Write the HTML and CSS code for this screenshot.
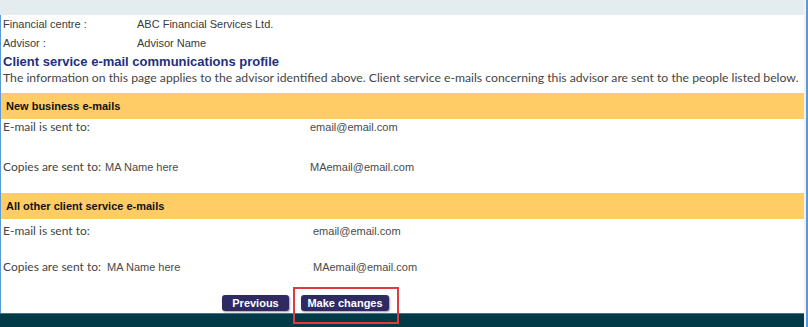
FILE: index.html
```html
<!DOCTYPE html>
<html lang="en">
<head>
  <meta charset="UTF-8" />
  <title>Client service e-mail communications profile</title>
  <link rel="stylesheet" href="styles.css">
</head>
<body>

<div class="window">
  <div class="page">
    <div class="topbar"></div>

    <div class="content">
      <div class="info">
        <div class="info-row"><span class="info-label">Financial centre :</span><span>ABC Financial Services Ltd.</span></div>
        <div class="info-row"><span class="info-label">Advisor :</span><span>Advisor Name</span></div>
      </div>

      <h1 class="title">Client service e-mail communications profile</h1>
      <p class="intro">The information on this page applies to the advisor identified above. Client service e-mails concerning this advisor are sent to the people listed below.</p>

      <!-- NEW BUSINESS -->
      <section class="group">
        <div class="band">New business e-mails</div>
        <div class="mail-row first">
          <span class="mail-label">E-mail is sent to:</span>
          <span class="mail-name"></span>
          <span class="mail-addr">email@email.com</span>
        </div>
        <div class="mail-row second">
          <span class="mail-label">Copies are sent to:</span>
          <span class="mail-name">MA Name here</span>
          <span class="mail-addr">MAemail@email.com</span>
        </div>
      </section>

      <!-- ALL OTHER -->
      <section class="group other">
        <div class="band">All other client service e-mails</div>
        <div class="mail-row first">
          <span class="mail-label">E-mail is sent to:</span>
          <span class="mail-name"></span>
          <span class="mail-addr">email@email.com</span>
        </div>
        <div class="mail-row second">
          <span class="mail-label">Copies are sent to:</span>
          <span class="mail-name">MA Name here</span>
          <span class="mail-addr">MAemail@email.com</span>
        </div>
      </section>

      <div class="actions">
        <button class="btn prev">Previous</button>
        <button class="btn marked">Make changes<span class="callout"></span></button>
      </div>
    </div>

    <div class="footer"></div>
  </div>
  <div class="edge"></div>
</div>

</body>
</html>
```

FILE: styles.css
```css
*{box-sizing:border-box}

body {
  margin:0;
  background:#fff;
  font-family:'Liberation Sans',Arial,sans-serif;
  color:#333;
  overflow:hidden;
}

.window {
  display:flex;
  height:327px;
}

.page {
  width:804px;
  display:flex;
  flex-direction:column;
}

.page > * {flex-shrink:0}

.edge {
  width:4px;
  border-left:2px solid #eef2f4;
  background:#5b9bd5;
}

.topbar {
  height:15px;
  background:#e5ecef;
}

.content {
  height:298px;
  border-left:1px solid #5b9bd5;
}

/* header info */
.info-row {
  display:flex;
  height:19px;
  line-height:19px;
  padding-left:2px;
  font-size:11px;
  color:#3a3a3a;
}
.info-label {width:134px}

.title {
  margin:0;
  padding-left:2px;
  font-size:13px;
  line-height:17px;
  color:#23307a;
  font-weight:bold;
}

.intro {
  margin:0 0 9px;
  padding:2px 0 0 2px;
  font-family:'Lato','Open Sans',sans-serif;
  font-size:12.2px;
  line-height:12px;
  color:#454545;
  white-space:nowrap;
}

.band {
  height:26px;
  background:#ffcc66;
  padding-left:5px;
  display:flex;
  align-items:center;
  font-size:11px;
  font-weight:bold;
  color:#111;
}

.mail-row {
  display:flex;
  align-items:baseline;
  padding-left:2px;
  font-size:11px;
  line-height:16px;
  color:#4a4a4a;
}
.mail-row.first  {height:39px}
.mail-row.second {height:35px;padding-top:1px}
.other .mail-row.first  {padding-top:4px}
.other .mail-row.second {height:37px}

.mail-label {
  font-family:'Lato','Open Sans',sans-serif;
  font-size:12px;
  color:#444;
  width:102px;
}
.mail-name {width:205px}
.other .mail-label {width:104px}
.other .mail-name {width:206px}

/* buttons */
.actions {
  display:flex;
  gap:12px;
  height:18px;
  padding-left:221px;
}

.btn {
  position:relative;
  height:16px;
  padding:0;
  border:none;
  border-radius:3px;
  background:#2f2a62;
  color:#fff;
  font-family:'Liberation Sans',Arial,sans-serif;
  font-size:11px;
  font-weight:bold;
  line-height:16px;
  box-shadow:1px 1px 2px #9a9ab0;
}
.btn.prev {width:67px}
.btn.marked {width:88px}

.callout {
  position:absolute;
  left:-8px;
  top:-8px;
  width:106px;
  height:37px;
  border:2px solid #e0393e;
  pointer-events:none;
}

.footer {
  height:14px;
  background:#023a47;
  border-top:1px solid #4f7480;
}
```
